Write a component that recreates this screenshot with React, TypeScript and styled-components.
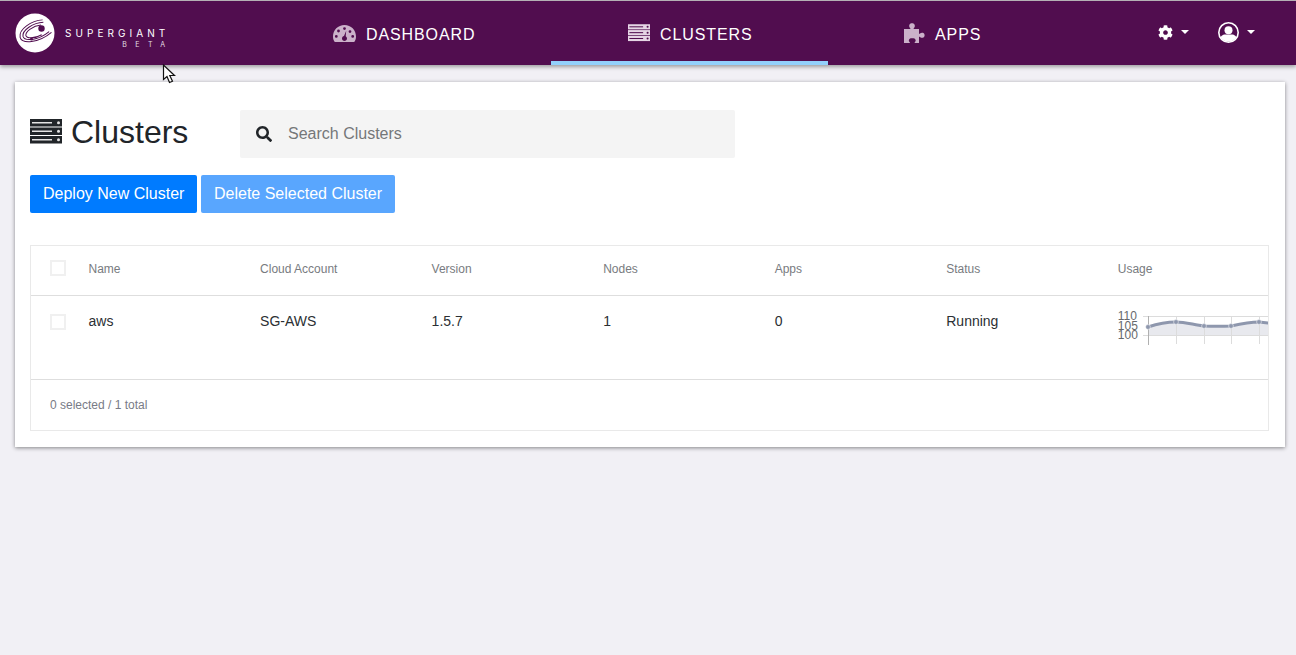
import styled, { createGlobalStyle } from "styled-components";
import { FaCog, FaSearch } from "react-icons/fa";

const GlobalStyle = createGlobalStyle`
    * {
        box-sizing: border-box;
    }
    html, body {
        margin: 0;
        min-height: 100%;
        background: #f1f0f5;
        font-family: "Liberation Sans", Arial, sans-serif;
        color: #212529;
    }
`

const Page = styled.div`
    position: relative;
    height: 655px;
    overflow: hidden;
    background: #f1f0f5;
`
const Navbar = styled.header`
    display: flex;
    height: 65px;
    background: #510d4f;
    border-top: 1px solid #b5b0b5;
    box-shadow: 0 2px 4px rgba(0, 0, 0, 0.35);
`
const Brand = styled.div`
    display: flex;
    align-items: center;
    gap: 10px;
    width: 320px;
    padding-left: 15px;
`
const BrandText = styled.div`
    display: flex;
    flex-direction: column;
    align-items: flex-end;
    margin-top: 9px;
    color: #fff;
    font-family: Inter, sans-serif;
    line-height: 1;
`
const BrandName = styled.span`
    font-size: 10px;
    letter-spacing: 4.05px;
    margin-right: -4.05px;
`
const BrandSub = styled.span`
    font-size: 7px;
    letter-spacing: 8.5px;
    margin-top: 3px;
    margin-right: -8.5px;
    opacity: 0.85;
`
const NavTabs = styled.nav`
    display: flex;
    flex: 1;
`
const NavTab = styled.a<{ $active?: boolean; $width: number; $left: number }>`
    display: flex;
    align-items: center;
    gap: 10px;
    width: ${props => props.$width}px;
    height: 64px;
    padding: 4px 0 0 ${props => props.$left}px;
    border-bottom: 4px solid ${props => (props.$active ? "#93d0fb" : "transparent")};
    color: #fff;
    font-size: 16px;
    letter-spacing: 0.9px;
`
const NavLabel = styled.span`
    margin-top: 4px;
`
const NavIcon = styled.svg<{ $active?: boolean }>`
    flex: none;
    color: ${props => (props.$active ? "#e6d5e5" : "#cbb1ca")};
`
const NavActions = styled.div`
    display: flex;
    align-items: flex-start;
    width: 138px;
    padding-top: 19px;
    color: #fff;
`
const NavAction = styled.div<{ $width: number }>`
    display: flex;
    align-items: center;
    gap: 8px;
    width: ${props => props.$width}px;
    height: 24px;
`
const Caret = styled.span`
    width: 0;
    height: 0;
    border-top: 4px solid #fff;
    border-left: 4px solid transparent;
    border-right: 4px solid transparent;
`
const Card = styled.main`
    margin: 17px 11px 0 15px;
    height: 365px;
    padding: 28px 16px 16px 15px;
    background: #fff;
    box-shadow: 0 1px 4px rgba(0, 0, 0, 0.45);
`
const TitleRow = styled.div`
    display: flex;
    align-items: center;
    height: 48px;
`
const Title = styled.h1`
    display: flex;
    align-items: center;
    gap: 9px;
    width: 210px;
    margin: 0;
    padding-bottom: 4px;
    font-size: 32px;
    font-weight: 400;
    line-height: 44px;
`
const TitleIcon = styled.svg`
    flex: none;
    color: #212529;
    margin-bottom: 1px;
`
const SearchBox = styled.div`
    display: flex;
    align-items: center;
    gap: 16px;
    width: 495px;
    height: 48px;
    padding-left: 16px;
    background: #f4f4f4;
    border-radius: 2px;
    color: #757779;
    font-size: 16px;

    svg {
        color: #212529;
        font-size: 16px;
    }
`
const Buttons = styled.div`
    display: flex;
    gap: 3.6px;
    margin-top: 17px;
`
const Button = styled.button<{ $disabled?: boolean }>`
    height: 38px;
    padding: 0 13px;
    border: 0;
    border-radius: 2px;
    background: ${props => (props.$disabled ? "#59a6fe" : "#007bff")};
    color: #fff;
    font-family: inherit;
    font-size: 16px;
`
const TableBox = styled.section`
    margin-top: 32px;
    height: 186px;
    border: 1px solid #e9e9e9;
`
const Row = styled.div<{ $height: number; $header?: boolean }>`
    display: grid;
    grid-template-columns: 57.5px repeat(6, 171.55px) 1fr;
    height: ${props => props.$height}px;
    padding-top: ${props => (props.$header ? 14 : 16)}px;
    border-bottom: 1px solid #dedede;
    color: ${props => (props.$header ? "#787b80" : "#2b2f33")};
    font-size: ${props => (props.$header ? 12 : 14)}px;
    line-height: 18px;
`
const CheckCell = styled.div<{ $top?: number }>`
    padding: ${props => props.$top || 0}px 0 0 19px;
`
const CheckBox = styled.span`
    display: block;
    width: 16px;
    height: 16px;
    border: 2px solid #f0f0f0;
`
const Cell = styled.div`
    white-space: nowrap;
`
const ChartCell = styled.div`
    position: relative;
    height: 43px;
    margin-top: -3px;
    padding-top: 3px;
    overflow: hidden;
`
const ChartLabels = styled.div`
    display: flex;
    flex-direction: column;
    color: #66696d;
    font-size: 12px;
    line-height: 9.5px;
`
const ChartSvg = styled.svg`
    position: absolute;
    left: 0;
    top: 3px;
`
const Footer = styled.div`
    padding: 16px 0 0 19px;
    color: #787b86;
    font-size: 12px;
    line-height: 18px;
`
const Cursor = styled.svg`
    position: absolute;
    left: 162px;
    top: 64px;
`

const columns = ["Name", "Cloud Account", "Version", "Nodes", "Apps", "Status", "Usage"]
const values = ["aws", "SG-AWS", "1.5.7", "1", "0", "Running"]
const points = [[30, 15], [58, 10], [86, 14], [113, 14], [141, 10]]

const Logo = () => (
    <svg width="40" height="40" viewBox="0 0 40 40">
        <circle cx="20" cy="20" r="19.5" fill="#fff" />
        <g fill="none" stroke="#510d4f" strokeWidth="1" transform="rotate(-16 20 20)">
            <path d="M31 9.500C20 7 5 12 4.500 20C4.500 27 20 31 36 24" />
            <path d="M31 12C21 9.500 8 14 7.500 20C7.500 25 20 28.500 34 22.500" />
            <path d="M28 14C20 12.500 11 16 10.500 20C10.500 23 18 25.500 26 23.500" />
        </g>
        <circle cx="26.500" cy="15.500" r="3.200" fill="#510d4f" />
        <circle cx="16.500" cy="26" r="1.500" fill="#510d4f" />
    </svg>
)

const ServerBars = ({ strip }: { strip: string }) => (
    <>
        {[0, 8.5, 17].map(y => (
            <g key={y}>
                <rect x="0" y={y} width="32" height="7.500" fill="currentColor" />
                <rect x="2" y={y + 3} width="20" height="1.500" fill={strip} />
                <circle cx="28.500" cy={y + 3.750} r="1.500" fill={strip} />
            </g>
        ))}
    </>
)

const GaugeIcon = () => (
    <NavIcon width="23" height="17" viewBox="0 0 23 17">
        <path fill="currentColor" fillRule="evenodd" d="M11.500 0C5 0 0 5 0 11.500C0 13.500 .500 15 1.300 16.500C1.500 16.800 1.800 17 2.200 17H20.800C21.200 17 21.500 16.800 21.700 16.500C22.500 15 23 13.500 23 11.500C23 5 18 0 11.500 0ZM11.500 2.200A1.400 1.400 0 1 1 11.490 5A1.400 1.400 0 0 1 11.500 2.200ZM5.500 4.600A1.400 1.400 0 1 1 5.490 7.400A1.400 1.400 0 0 1 5.500 4.600ZM3.300 10A1.400 1.400 0 1 1 3.290 12.800A1.400 1.400 0 0 1 3.300 10ZM19.700 10A1.400 1.400 0 1 1 19.690 12.800A1.400 1.400 0 0 1 19.700 10ZM17 5.200A1.400 1.400 0 1 1 16.990 8A1.400 1.400 0 0 1 17 5.200ZM13.200 5.800L12.700 11.200C13.500 11.800 14 12.600 14 13.500C14 15 12.800 16 11.500 16C10 16 9 15 9 13.500C9 12.200 10 11.200 11 11L13.200 5.800Z" />
    </NavIcon>
)

const PuzzleIcon = () => (
    <NavIcon width="21" height="20" viewBox="0 0 21 20">
        <path fill="currentColor" d="M0 6H6C6.500 6 6.500 5.500 6 5C5 4 5 2.500 5.500 1.500C6.500 -.3 9.500 -.3 10.500 1.500C11 2.500 11 4 10 5C9.500 5.500 9.500 6 10 6H15V10.500C15 11 15.500 11 16 10.500C17 9.500 18.500 9.500 19.500 10C21 11 21 13.500 19.500 14.500C18.500 15 17 15 16 14C15.500 13.500 15 13.500 15 14V20H11C10.500 20 10.500 19.500 11 19C12 18 12 16.500 10.500 15.500C9.500 15 7 15 6 15.500C4.500 16.500 4.500 18 5.500 19C6 19.500 6 20 5.500 20H0Z" />
    </NavIcon>
)

const UserIcon = () => (
    <svg width="21" height="21" viewBox="0 0 21 21">
        <defs>
            <clipPath id="user-ring">
                <circle cx="10.500" cy="10.500" r="9.300" />
            </clipPath>
        </defs>
        <circle cx="10.500" cy="10.500" r="9.700" fill="none" stroke="#fff" strokeWidth="1.600" />
        <circle cx="10.500" cy="8.200" r="4" fill="#fff" />
        <path d="M2 21V17C2 14.500 5 12.500 7 12.500H14C16 12.500 19 14.500 19 17V21Z" fill="#fff" clipPath="url(#user-ring)" />
    </svg>
)

const Sparkline = () => (
    <ChartSvg width="151" height="40" viewBox="0 0 151 40">
        <path d="M30 15C39 12 49 10 58 10C68 10 76 13 86 14C96 14.500 103 14.500 113 14C122 12 132 10 141 10L151 11V23.500H30Z" fill="#e8e9ee" />
        <g stroke="#dcdcdc" strokeWidth="1">
            <path d="M58.500 4V32M86.500 4V32M113.500 4V32M141.500 4V32" />
            <path d="M25 4.500H151M25 23.500H151" />
        </g>
        <path d="M30.500 4V33" stroke="#b0b0b0" strokeWidth="1" />
        <path d="M30 15C39 12 49 10 58 10C68 10 76 13 86 14C96 14.500 103 14.500 113 14C122 12 132 10 141 10L151 11" fill="none" stroke="#8e97ad" strokeWidth="3" />
        <g fill="#8e97ad" stroke="#fff" strokeWidth="0.5">
            {points.map(([x, y]) => <circle key={x} cx={x} cy={y} r="2.400" />)}
        </g>
    </ChartSvg>
)

export default function App() {
    return (
        <Page>
            <GlobalStyle />
            <Navbar>
                <Brand>
                    <Logo />
                    <BrandText>
                        <BrandName>SUPERGIANT</BrandName>
                        <BrandSub>BETA</BrandSub>
                    </BrandText>
                </Brand>
                <NavTabs>
                    <NavTab $width={231} $left={13}>
                        <GaugeIcon />
                        <NavLabel>DASHBOARD</NavLabel>
                    </NavTab>
                    <NavTab $active $width={277} $left={77}>
                        <NavIcon $active width="22" height="18" viewBox="0 0 32 25.500">
                            <ServerBars strip="#510d4f" />
                        </NavIcon>
                        <NavLabel>CLUSTERS</NavLabel>
                    </NavTab>
                    <NavTab $width={180} $left={76}>
                        <PuzzleIcon />
                        <NavLabel>APPS</NavLabel>
                    </NavTab>
                </NavTabs>
                <NavActions>
                    <NavAction $width={60}><FaCog size={15} /><Caret /></NavAction>
                    <NavAction $width={60}><UserIcon /><Caret /></NavAction>
                </NavActions>
            </Navbar>
            <Card>
                <TitleRow>
                    <Title>
                        <TitleIcon width="32" height="25.500" viewBox="0 0 32 25.500">
                            <ServerBars strip="#e4e4e4" />
                        </TitleIcon>
                        Clusters
                    </Title>
                    <SearchBox><FaSearch />Search Clusters</SearchBox>
                </TitleRow>
                <Buttons>
                    <Button>Deploy New Cluster</Button>
                    <Button $disabled>Delete Selected Cluster</Button>
                </Buttons>
                <TableBox>
                    <Row $header $height={50}>
                        <CheckCell><CheckBox /></CheckCell>
                        {columns.map(name => <Cell key={name}>{name}</Cell>)}
                    </Row>
                    <Row $height={84}>
                        <CheckCell $top={2}><CheckBox /></CheckCell>
                        {values.map(value => <Cell key={value}>{value}</Cell>)}
                        <ChartCell>
                            <ChartLabels>
                                <span>110</span>
                                <span>105</span>
                                <span>100</span>
                            </ChartLabels>
                            <Sparkline />
                        </ChartCell>
                    </Row>
                    <Footer>0 selected / 1 total</Footer>
                </TableBox>
            </Card>
            <Cursor width="15" height="20" viewBox="0 0 15 20">
                <path d="M1.500 1V15.500L5 12.500L7.500 18.500L10.500 17.300L7.800 11.500H12.500Z" fill="#fff" stroke="#111" strokeWidth="1.200" />
            </Cursor>
        </Page>
    );
}
